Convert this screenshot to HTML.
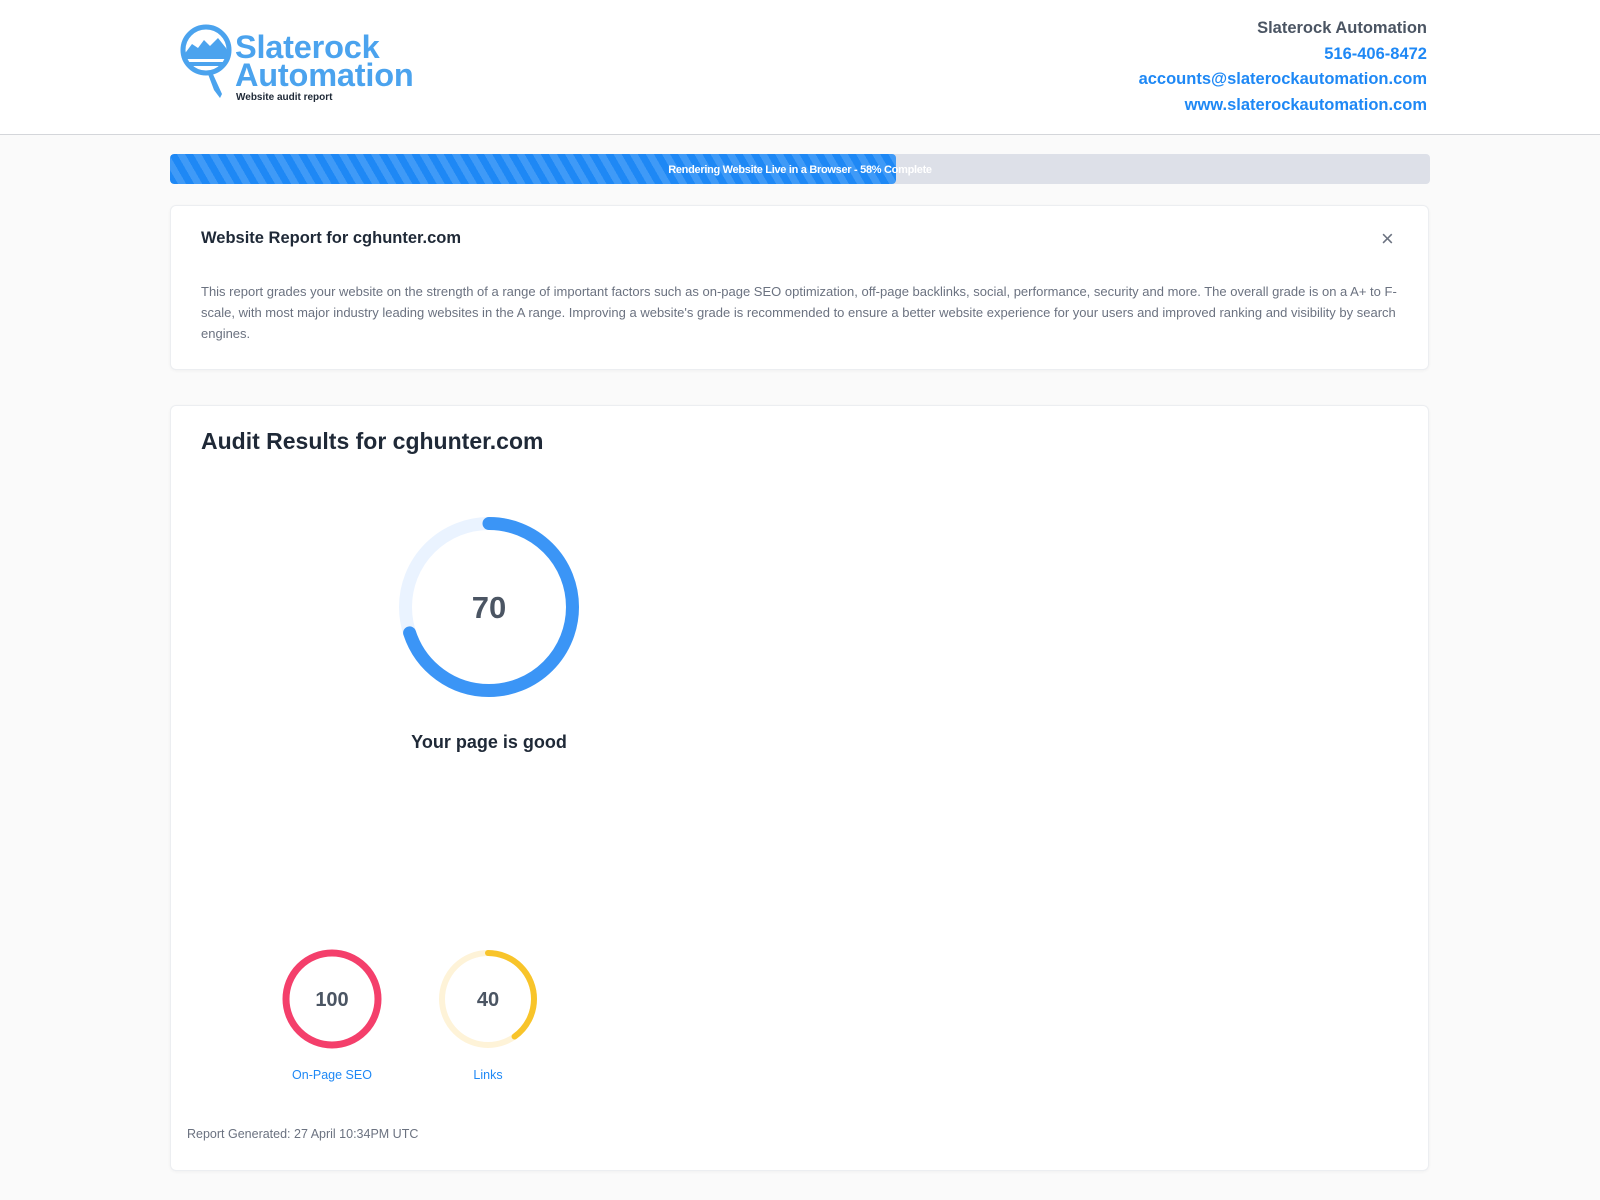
<!DOCTYPE html>
<html><head><meta charset="utf-8"><style>
*{box-sizing:border-box;margin:0;padding:0}
body{width:1600px;height:1200px;background:#fafafa;font-family:"Liberation Sans",sans-serif;position:relative;overflow:hidden;color:#1f2937}
.hdr{position:absolute;left:0;top:0;width:1600px;height:135px;background:#fff;border-bottom:1px solid #d4d6da}
.abs{position:absolute}
.rt{right:173px;text-align:right;font-size:16.5px;white-space:nowrap}
.card{position:absolute;left:170px;width:1259px;background:#fff;border:1px solid #eceef1;border-radius:6px;box-shadow:0 1px 3px rgba(0,0,0,.04)}
</style></head><body>
<div class="hdr">
<svg class="abs" style="left:180px;top:24px" width="60" height="78" viewBox="0 0 60 78">
<circle cx="26" cy="26" r="23" fill="none" stroke="#4ba3ee" stroke-width="5"/>
<path d="M6 28 L12 20 L18 24 L24 16 L30 22 L38 14 L46 24 L48 30 L4 30 Z" fill="#4ba3ee"/>
<rect x="4" y="30" width="44" height="5" fill="#4ba3ee"/>
<rect x="6" y="38" width="40" height="4" fill="#4ba3ee"/>
<path d="M32 48 L42 70 L40 74 L34 66 L28 50 Z" fill="#4ba3ee"/>
</svg>
<div class="abs" style="left:235px;top:33px;font-size:32.5px;font-weight:bold;color:#4ba3ee;line-height:28px;letter-spacing:-0.2px">Slaterock<br>Automation</div>
<div class="abs" style="left:236px;top:92px;font-size:10px;font-weight:bold;color:#1f2937">Website audit report</div>
<div class="abs rt" style="top:19px;color:#4b5563;font-weight:bold">Slaterock Automation</div>
<div class="abs rt" style="top:45px;color:#1e88f5;font-weight:bold">516-406-8472</div>
<div class="abs rt" style="top:70px;color:#1e88f5;font-weight:bold">accounts@slaterockautomation.com</div>
<div class="abs rt" style="top:96px;color:#1e88f5;font-weight:bold">www.slaterockautomation.com</div>
</div>
<div class="abs" style="left:170px;top:154px;width:1260px;height:30px;background:#dde0e8;border-radius:4px;overflow:hidden">
<div style="width:726px;height:30px;border-radius:4px;background:repeating-linear-gradient(60deg,#1e88f5 0 7px,#3f9af7 7px 14px)"></div>
<div class="abs" style="left:0;top:1px;width:1260px;text-align:center;line-height:30px;font-size:11px;color:#fff;font-weight:bold;letter-spacing:-0.3px">Rendering Website Live in a Browser - 58% Complete</div>
</div>
<div class="card" style="top:205px;height:165px">
<div class="abs" style="left:30px;top:23px;font-size:16.5px;font-weight:bold;color:#1f2937">Website Report for cghunter.com</div>
<div class="abs" style="left:1210px;top:20px;font-size:22px;color:#6b7280">×</div>
<div class="abs" style="left:30px;top:75px;width:1205px;font-size:13px;line-height:21px;color:#6b7280">This report grades your website on the strength of a range of important factors such as on-page SEO optimization, off-page backlinks, social, performance, security and more. The overall grade is on a A+ to F-scale, with most major industry leading websites in the A range. Improving a website's grade is recommended to ensure a better website experience for your users and improved ranking and visibility by search engines.</div>
</div>
<div class="card" style="top:405px;height:766px">
<div class="abs" style="left:30px;top:22px;font-size:23px;font-weight:bold;color:#1f2937">Audit Results for cghunter.com</div>
<svg class="abs" style="left:218px;top:101px" width="200" height="200" viewBox="0 0 200 200">
<circle cx="100" cy="100" r="83.5" fill="none" stroke="#eaf3ff" stroke-width="13"/>
<circle cx="100" cy="100" r="83.5" fill="none" stroke="#3b95f6" stroke-width="13" stroke-linecap="round" stroke-dasharray="367 600" transform="rotate(-90 100 100)"/>
<text x="100" y="111" text-anchor="middle" font-size="31" font-weight="bold" fill="#4b5563" font-family="Liberation Sans">70</text>
</svg>
<div class="abs" style="left:218px;top:326px;width:200px;text-align:center;font-size:18px;font-weight:bold;color:#1f2937">Your page is good</div>
<svg class="abs" style="left:111px;top:543px" width="100" height="100" viewBox="0 0 100 100">
<circle cx="50" cy="50" r="46" fill="none" stroke="#f43f6b" stroke-width="7"/>
<text x="50" y="57" text-anchor="middle" font-size="20" font-weight="bold" fill="#4b5563" font-family="Liberation Sans">100</text>
</svg>
<svg class="abs" style="left:267px;top:543px" width="100" height="100" viewBox="0 0 100 100">
<circle cx="50" cy="50" r="46" fill="none" stroke="#fef3d8" stroke-width="6"/>
<circle cx="50" cy="50" r="46" fill="none" stroke="#f8c42a" stroke-width="6" stroke-linecap="round" stroke-dasharray="116 300" transform="rotate(-90 50 50)"/>
<text x="50" y="57" text-anchor="middle" font-size="20" font-weight="bold" fill="#4b5563" font-family="Liberation Sans">40</text>
</svg>
<div class="abs" style="left:101px;top:662px;width:120px;text-align:center;font-size:12.5px;color:#1e88f5">On-Page SEO</div>
<div class="abs" style="left:257px;top:662px;width:120px;text-align:center;font-size:12.5px;color:#1e88f5">Links</div>
<div class="abs" style="left:16px;top:721px;font-size:12.5px;color:#6b7280">Report Generated: 27 April 10:34PM UTC</div>
</div>
</body></html>
